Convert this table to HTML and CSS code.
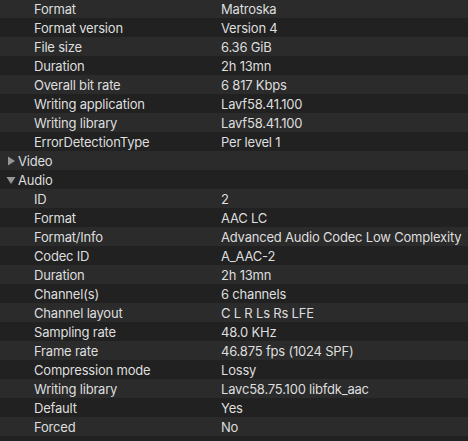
FILE: index.html
```html
<!DOCTYPE html>
<html>
<head>
<meta charset="utf-8">
<link rel="stylesheet" href="styles.css">
</head>
<body>
<div class="table">
  <div class="row"><span class="key">Format</span><span class="val">Matroska</span></div>
  <div class="row"><span class="key">Format version</span><span class="val">Version 4</span></div>
  <div class="row"><span class="key">File size</span><span class="val">6.36 GiB</span></div>
  <div class="row"><span class="key">Duration</span><span class="val">2h 13mn</span></div>
  <div class="row"><span class="key">Overall bit rate</span><span class="val">6 817 Kbps</span></div>
  <div class="row"><span class="key">Writing application</span><span class="val">Lavf58.41.100</span></div>
  <div class="row"><span class="key">Writing library</span><span class="val">Lavf58.41.100</span></div>
  <div class="row"><span class="key">ErrorDetectionType</span><span class="val">Per level 1</span></div>
  <div class="row group"><svg class="tri" width="10" height="10" viewBox="0 0 10 10"><path d="M2 0.5 L9 5 L2 9.5 Z" fill="#969696"/></svg><span class="gname">Video</span></div>
  <div class="row group"><svg class="tri" width="10" height="10" viewBox="0 0 10 10"><path d="M0.5 2 L9.5 2 L5 9 Z" fill="#969696"/></svg><span class="gname">Audio</span></div>
  <div class="row"><span class="key">ID</span><span class="val">2</span></div>
  <div class="row"><span class="key">Format</span><span class="val">AAC LC</span></div>
  <div class="row"><span class="key">Format/Info</span><span class="val">Advanced Audio Codec Low Complexity</span></div>
  <div class="row"><span class="key">Codec ID</span><span class="val">A_AAC-2</span></div>
  <div class="row"><span class="key">Duration</span><span class="val">2h 13mn</span></div>
  <div class="row"><span class="key">Channel(s)</span><span class="val">6 channels</span></div>
  <div class="row"><span class="key">Channel layout</span><span class="val">C L R Ls Rs LFE</span></div>
  <div class="row"><span class="key">Sampling rate</span><span class="val">48.0 KHz</span></div>
  <div class="row"><span class="key">Frame rate</span><span class="val">46.875 fps (1024 SPF)</span></div>
  <div class="row"><span class="key">Compression mode</span><span class="val">Lossy</span></div>
  <div class="row"><span class="key">Writing library</span><span class="val">Lavc58.75.100 libfdk_aac</span></div>
  <div class="row"><span class="key">Default</span><span class="val">Yes</span></div>
  <div class="row"><span class="key">Forced</span><span class="val">No</span></div>
</div>
</body>
</html>
```
FILE: styles.css
```css
html, body {
  margin: 0;
  padding: 0;
  background: #212121;
  overflow: hidden;
}
.table {
  margin-top: -1px;
  font-family: Inter, "Noto Sans", sans-serif;
  font-size: 13px;
  letter-spacing: -0.2px;
  color: #dedede;
}
.row {
  height: 19px;
  display: flex;
  align-items: center;
  background: #212121;
}
.row:nth-child(odd) {
  background: #2b2b2b;
}
.key {
  padding-left: 34px;
  width: 187px;
  flex: none;
  white-space: nowrap;
}
.val {
  white-space: nowrap;
}
.group .tri {
  margin-left: 6px;
  flex: none;
}
.gname {
  margin-left: 2px;
}
```
